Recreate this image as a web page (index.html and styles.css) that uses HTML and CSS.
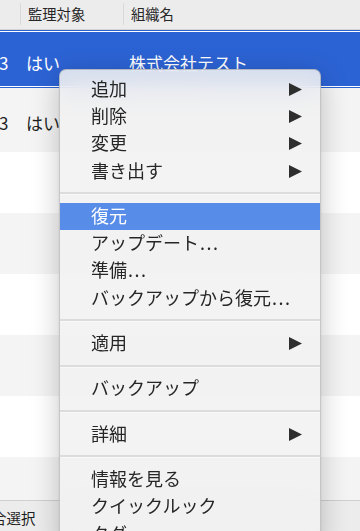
FILE: index.html
```html
<!DOCTYPE html>
<html lang="ja">
<head>
<meta charset="utf-8">
<link rel="stylesheet" href="styles.css">
</head>
<body>
<div class="screen">
  <div class="header">
    <div class="hcell c1"></div>
    <div class="hcell c2">監理対象</div>
    <div class="hcell c3">組織名</div>
  </div>
  <div class="rows">
    <div class="row sel"><span class="c1 num">3</span><span class="c2">はい</span><span class="c3">株式会社テスト</span></div>
    <div class="row gray r2"><span class="c1 num">3</span><span class="c2">はい</span><span class="c3"></span></div>
    <div class="row white"></div>
    <div class="row gray"></div>
    <div class="row white"></div>
    <div class="row gray"></div>
    <div class="row white"></div>
    <div class="row gray last"></div>
  </div>
  <div class="status"><span class="status-text">合選択</span></div>

  <div class="menu">
    <div class="item"><span>追加</span><svg class="arrow" viewBox="0 0 13 13"><polygon points="0,0 13,6.5 0,13"/></svg></div>
    <div class="item"><span>削除</span><svg class="arrow" viewBox="0 0 13 13"><polygon points="0,0 13,6.5 0,13"/></svg></div>
    <div class="item"><span>変更</span><svg class="arrow" viewBox="0 0 13 13"><polygon points="0,0 13,6.5 0,13"/></svg></div>
    <div class="item"><span>書き出す</span><svg class="arrow" viewBox="0 0 13 13"><polygon points="0,0 13,6.5 0,13"/></svg></div>
    <div class="sep"></div>
    <div class="item active"><span>復元</span></div>
    <div class="item"><span>アップデート<span class="dots">...</span></span></div>
    <div class="item"><span>準備<span class="dots">...</span></span></div>
    <div class="item"><span>バックアップから復元<span class="dots">...</span></span></div>
    <div class="sep"></div>
    <div class="item"><span>適用</span><svg class="arrow" viewBox="0 0 13 13"><polygon points="0,0 13,6.5 0,13"/></svg></div>
    <div class="sep"></div>
    <div class="item"><span>バックアップ</span></div>
    <div class="sep"></div>
    <div class="item"><span>詳細</span><svg class="arrow" viewBox="0 0 13 13"><polygon points="0,0 13,6.5 0,13"/></svg></div>
    <div class="sep"></div>
    <div class="item"><span>情報を見る</span></div>
    <div class="item"><span>クイックルック</span></div>
    <div class="item"><span>タグ</span></div>
  </div>
</div>
</body>
</html>
```

FILE: styles.css
```css
* { box-sizing: border-box; }
html, body {
  margin: 0;
  padding: 0;
  width: 360px;
  height: 531px;
  overflow: hidden;
  background: #fff;
  font-family: "Noto Sans CJK JP", "Noto Sans", sans-serif;
}
.screen {
  position: relative;
  width: 360px;
  height: 531px;
  overflow: hidden;
  display: flex;
  flex-direction: column;
}
.header {
  height: 30px;
  flex: none;
  display: flex;
  align-items: center;
  background: #ececec;
  border-bottom: 1px solid #d4d4d4;
  font-size: 14.3px;
  color: #262626;
}
.hcell {
  height: 22px;
  display: flex;
  align-items: center;
  padding-left: 7px;
  border-left: 1px solid #d9d9d9;
  margin-top: -2px;
}
.hcell.c1 { border-left: none; width: 20px; padding-left: 0; }
.c1 { width: 20px; flex: none; }
.c2 { width: 103px; flex: none; padding-left: 7px; }
.c3 { flex: 1; padding-left: 7px; }
.rows {
  flex: none;
  display: flex;
  flex-direction: column;
}
.row {
  height: 61px;
  flex: none;
  display: flex;
  align-items: center;
  font-size: 17px;
  color: #1f1f1f;
}
.row.white { background: #fff; }
.row.gray { background: #f4f4f4; }
.row.sel {
  height: 58px;
  background: #2c63d4;
  border-top: 1px solid #2c63d4;
  border-bottom: 1px solid #2c63d4;
  box-shadow: inset 0 1px 0 #fff, inset 0 -1px 0 #fff;
  color: #fff;
  padding-top: 6px;
}
.row.r2 { height: 64px; padding-top: 4px; }
.row.last { height: 43px; }
.num { margin-left: -1px; }
.status {
  flex: 1;
  background: #ececec;
  border-top: 1px solid #cfcfcf;
  display: flex;
  align-items: center;
  font-size: 14.5px;
  color: #1f1f1f;
}
.status-text { margin-left: -8px; margin-top: 2px; }

.menu {
  position: absolute;
  left: 59px;
  top: 69px;
  width: 262px;
  height: 480px;
  padding-top: 5.5px;
  border-radius: 7px;
  background: rgba(241, 241, 241, 0.86);
  -webkit-backdrop-filter: blur(14px);
  backdrop-filter: blur(14px);
  border: 0.5px solid rgba(0, 0, 0, 0.18);
  box-shadow: 0 6px 28px rgba(0, 0, 0, 0.22), 0 0 3px rgba(0, 0, 0, 0.08);
  font-size: 18px;
  color: #262626;
  display: flex;
  flex-direction: column;
}
.item {
  height: 27.3px;
  flex: none;
  display: flex;
  align-items: center;
  justify-content: space-between;
  padding-left: 31px;
  padding-right: 18px;
  padding-bottom: 3px;
  line-height: 1;
}
.item .arrow { margin-top: 3px; }
.dots { letter-spacing: 1.5px; margin-left: 1px; }
.item.active {
  background: #588ce9;
  color: #fff;
}
.arrow {
  width: 13px;
  height: 13px;
  fill: #2e2e2e;
}
.sep {
  height: 18px;
  flex: none;
  display: flex;
  flex-direction: column;
  justify-content: center;
}
.sep::before {
  content: "";
  display: block;
  height: 2px;
  background: #dcdcdc;
  border-bottom: 1px solid #f8f8f8;
}
```
